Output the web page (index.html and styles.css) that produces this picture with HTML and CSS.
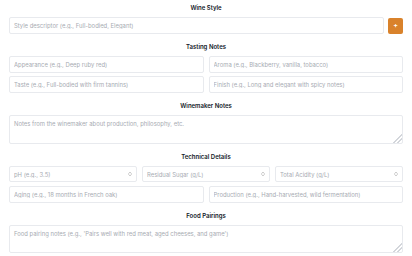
FILE: index.html
```html
<!DOCTYPE html>
<html>
<head>
<meta charset="utf-8">
<link rel="stylesheet" href="styles.css">
</head>
<body>
<div class="form">
  <section class="sec">
    <h3 class="title">Wine Style</h3>
    <div class="row-add">
      <input class="field" placeholder="Style descriptor (e.g., Full-bodied, Elegant)">
      <button class="add">+</button>
    </div>
  </section>
  <section class="sec">
    <h3 class="title">Tasting Notes</h3>
    <div class="grid2">
      <input class="field" placeholder="Appearance (e.g., Deep ruby red)">
      <input class="field" placeholder="Aroma (e.g., Blackberry, vanilla, tobacco)">
      <input class="field" placeholder="Taste (e.g., Full-bodied with firm tannins)">
      <input class="field" placeholder="Finish (e.g., Long and elegant with spicy notes)">
    </div>
  </section>
  <section class="sec">
    <h3 class="title">Winemaker Notes</h3>
    <textarea class="area" placeholder="Notes from the winemaker about production, philosophy, etc."></textarea>
  </section>
  <section class="sec">
    <h3 class="title">Technical Details</h3>
    <div class="grid3">
      <div class="num"><input class="field" placeholder="pH (e.g., 3.5)"><svg class="spin" viewBox="0 0 6 10" width="4" height="6"><path d="M1 4 L3 2 L5 4 M1 6 L3 8 L5 6" fill="none" stroke="#9a9a9a" stroke-width="1.1" stroke-linecap="round" stroke-linejoin="round"/></svg></div>
      <div class="num"><input class="field" placeholder="Residual Sugar (g/L)"><svg class="spin" viewBox="0 0 6 10" width="4" height="6"><path d="M1 4 L3 2 L5 4 M1 6 L3 8 L5 6" fill="none" stroke="#9a9a9a" stroke-width="1.1" stroke-linecap="round" stroke-linejoin="round"/></svg></div>
      <div class="num"><input class="field" placeholder="Total Acidity (g/L)"><svg class="spin" viewBox="0 0 6 10" width="4" height="6"><path d="M1 4 L3 2 L5 4 M1 6 L3 8 L5 6" fill="none" stroke="#9a9a9a" stroke-width="1.1" stroke-linecap="round" stroke-linejoin="round"/></svg></div>
    </div>
    <div class="grid2 mt">
      <input class="field" placeholder="Aging (e.g., 18 months in French oak)">
      <input class="field" placeholder="Production (e.g., Hand-harvested, wild fermentation)">
    </div>
  </section>
  <section class="sec">
    <h3 class="title">Food Pairings</h3>
    <textarea class="area area2" placeholder="Food pairing notes (e.g., 'Pairs well with red meat, aged cheeses, and game')"></textarea>
  </section>
</div>
</body>
</html>
```

FILE: styles.css
```css
* { box-sizing: border-box; }
html, body { margin: 0; padding: 0; background: #fff; }
body { font-family: Inter, "Liberation Sans", sans-serif; color: #1f2937; }
.form { padding: 3px 9px 0 9px; display: flex; flex-direction: column; gap: 8px; }
.sec { display: flex; flex-direction: column; }
.title { margin: 0 0 4px 0; font-size: 6px; line-height: 10px; font-weight: 600; text-align: center; color: #111827; }
.field {
  display: block; width: 100%; height: 17px; margin: 0;
  border: 1px solid #e8eaee; border-radius: 2px; background: #fff;
  padding: 0 4px; font-family: inherit; font-size: 5.9px; color: #374151; outline: none;
}
.field::placeholder { color: #a7abb2; }
.row-add { display: flex; gap: 4px; align-items: center; }
.row-add .field { flex: 1; }
.add {
  width: 15px; height: 16px; flex: none; margin: 0; padding: 0; border: none; border-radius: 2px;
  background: #d9822b; color: #fff; font-family: inherit; font-size: 7px; line-height: 16px; font-weight: 600;
}
.grid2 { display: grid; grid-template-columns: 1fr 1fr; gap: 3px 5px; }
.grid3 { display: grid; grid-template-columns: 1fr 1fr 1fr; gap: 5px; }
.grid3 .field { height: 16px; }
.mt { margin-top: 4px; }
.num { position: relative; }
.spin { position: absolute; right: 5px; top: 5px; }
.area {
  display: block; width: 100%; height: 29px; margin: 0; resize: vertical;
  border: 1px solid #e8eaee; border-radius: 2px; background: #fff;
  padding: 4px 4px; font-family: inherit; font-size: 5.9px; line-height: 8px; color: #374151; outline: none;
}
.area::placeholder { color: #a7abb2; }
.area::-webkit-resizer {
  background: linear-gradient(135deg, transparent 68%, #d3d6db 68%, #d3d6db 74%, transparent 74%, transparent 82%, #d3d6db 82%, #d3d6db 88%, transparent 88%);
}
.area2 { height: 28px; }
```
